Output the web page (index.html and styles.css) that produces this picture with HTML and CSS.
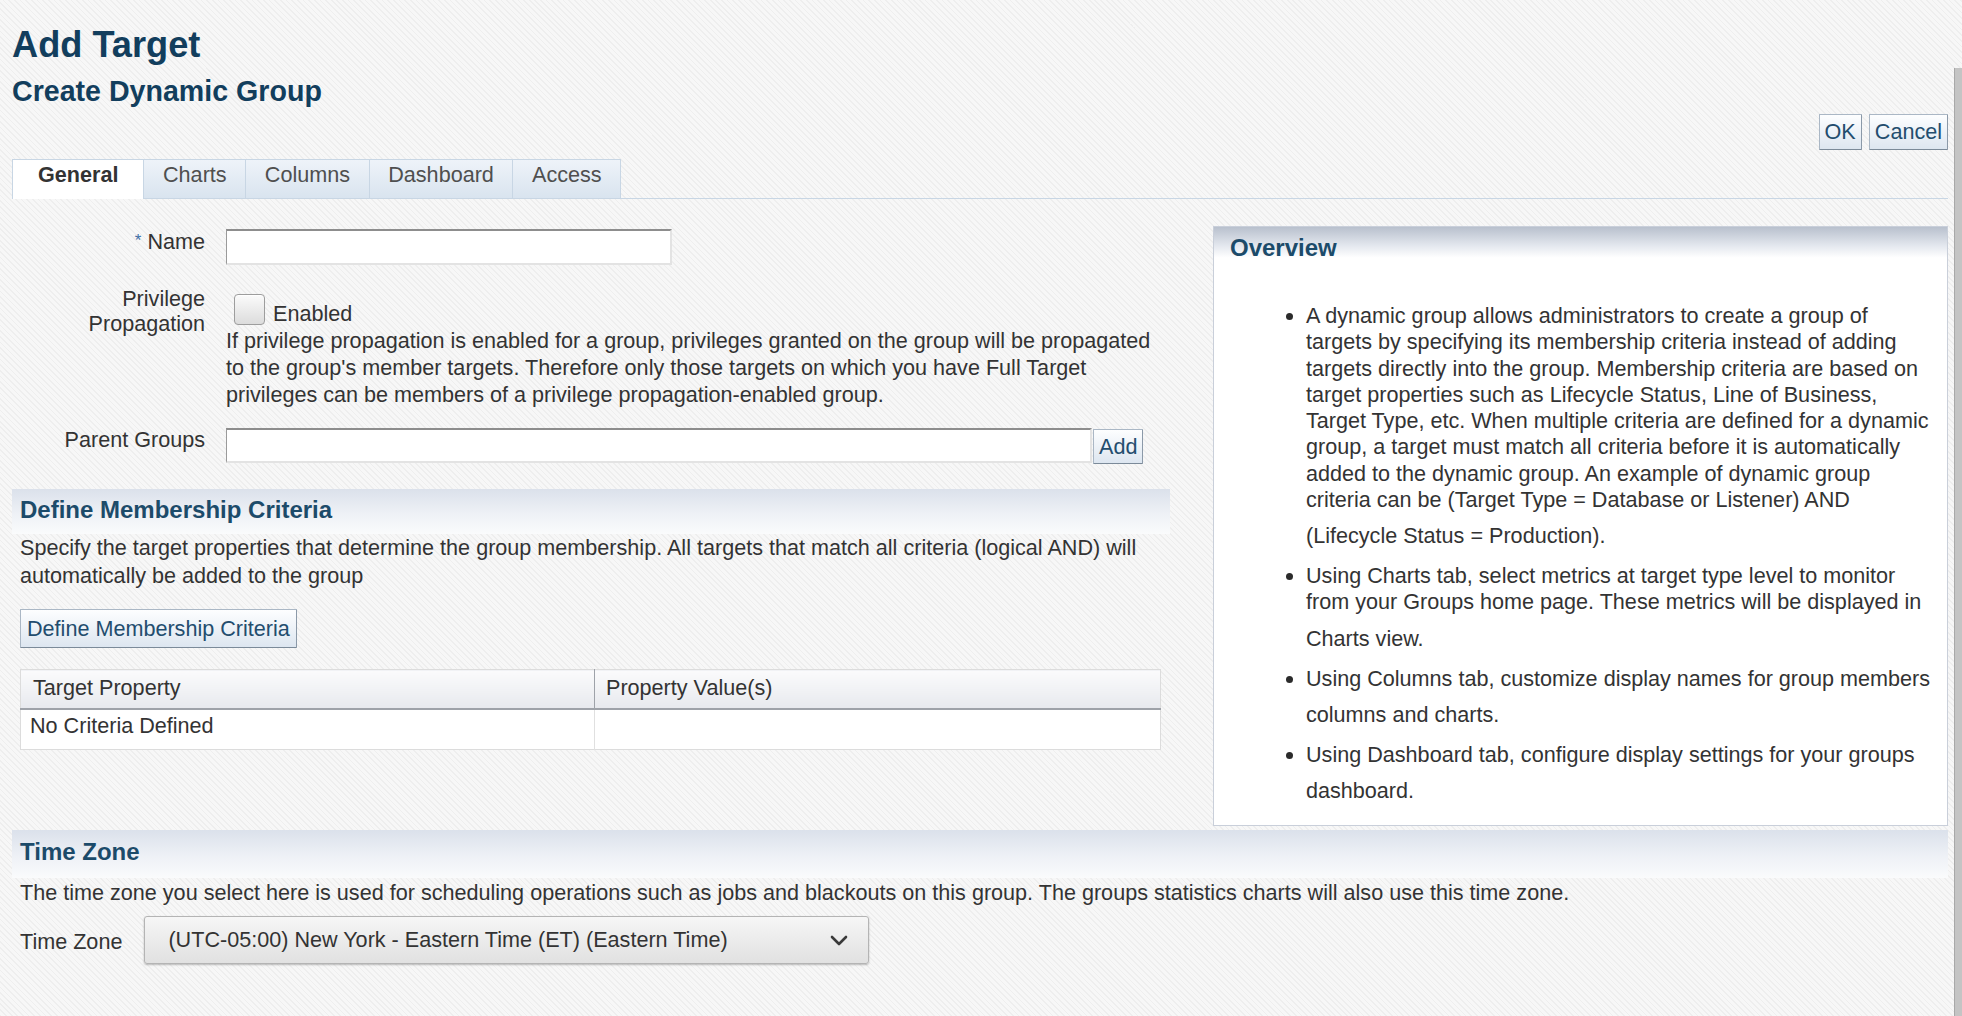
FILE: index.html
```html
<!DOCTYPE html>
<html lang="en">
<head>
<meta charset="utf-8">
<title>Add Target - Create Dynamic Group</title>
<link rel="stylesheet" href="styles.css">
</head>
<body>
<div class="page">
  <header class="page-head">
    <h1 class="title">Add Target</h1>
    <h2 class="subtitle">Create Dynamic Group</h2>
    <div class="actions">
      <button class="btn btn-ok">OK</button>
      <button class="btn">Cancel</button>
    </div>
  </header>

  <nav class="tabs">
    <div class="tab tab-selected">General</div>
    <div class="tab">Charts</div>
    <div class="tab">Columns</div>
    <div class="tab">Dashboard</div>
    <div class="tab">Access</div>
  </nav>

  <div class="content">
    <div class="main-col">
      <div class="form">
        <label class="label label-single"><span class="req">*</span> Name</label>
        <div class="control"><input class="input input-name" type="text"></div>

        <label class="label label-double">Privilege Propagation</label>
        <div class="control">
          <div class="check-row">
            <span class="checkbox"></span>
            <span class="check-text">Enabled</span>
          </div>
          <p class="para">If privilege propagation is enabled for a group, privileges granted on the group will be propagated to the group's member targets. Therefore only those targets on which you have Full Target privileges can be members of a privilege propagation-enabled group.</p>
        </div>

        <label class="label label-single">Parent Groups</label>
        <div class="control control-row">
          <input class="input input-parent" type="text">
          <button class="btn btn-add">Add</button>
        </div>
      </div>

      <section class="section section-criteria">
        <div class="section-head">Define Membership Criteria</div>
        <p class="section-desc">Specify the target properties that determine the group membership. All targets that match all criteria (logical AND) will automatically be added to the group</p>
        <button class="btn btn-define">Define Membership Criteria</button>
        <table class="criteria">
          <thead>
            <tr><th class="col-prop">Target Property</th><th class="col-val">Property Value(s)</th></tr>
          </thead>
          <tbody>
            <tr><td class="col-prop">No Criteria Defined</td><td class="col-val"></td></tr>
          </tbody>
        </table>
      </section>
    </div>

    <aside class="overview">
      <div class="panel-head">Overview</div>
      <ul class="overview-list">
        <li>A dynamic group allows administrators to create a group of targets by specifying its membership criteria instead of adding targets directly into the group. Membership criteria are based on target properties such as Lifecycle Status, Line of Business, Target Type, etc. When multiple criteria are defined for a dynamic group, a target must match all criteria before it is automatically added to the dynamic group. An example of dynamic group criteria can be (Target Type = Database or Listener) AND (Lifecycle Status = Production).</li>
        <li>Using Charts tab, select metrics at target type level to monitor from your Groups home page. These metrics will be displayed in Charts view.</li>
        <li>Using Columns tab, customize display names for group members columns and charts.</li>
        <li>Using Dashboard tab, configure display settings for your groups dashboard.</li>
      </ul>
    </aside>
  </div>

  <section class="section section-tz">
    <div class="section-head">Time Zone</div>
    <p class="section-desc">The time zone you select here is used for scheduling operations such as jobs and blackouts on this group. The groups statistics charts will also use this time zone.</p>
    <div class="tz-row">
      <span class="tz-label">Time Zone</span>
      <div class="select">
        <span class="select-text">(UTC-05:00) New York - Eastern Time (ET) (Eastern Time)</span>
        <svg class="chevron" width="18" height="11" viewBox="0 0 18 11"><path d="M2 2 L9 9 L16 2" fill="none" stroke="#3a3a3a" stroke-width="2.6" stroke-linecap="round" stroke-linejoin="round"/></svg>
      </div>
    </div>
  </section>
</div>
<div class="scrollbar"></div>
</body>
</html>
```

FILE: styles.css
```css
* {
  box-sizing: border-box;
}

html, body {
  margin: 0;
  padding: 0;
}

body {
  width: 1962px;
  height: 1016px;
  overflow: hidden;
  font-family: "Liberation Sans", Arial, sans-serif;
  font-size: 21.6px;
  color: #333333;
  background-color: #f4f4f4;
  background-image: repeating-linear-gradient(45deg, #eeeeee 0px, #eeeeee 1.2px, #f7f7f7 1.2px, #f7f7f7 4px);
}

.page {
  padding: 25px 14px 0 12px;
}

/* ---------- header ---------- */
.title {
  margin: 0;
  font-size: 36.2px;
  line-height: 40px;
  font-weight: bold;
  color: #123e5d;
}

.subtitle {
  margin: 9px 0 0;
  font-size: 28.6px;
  line-height: 34px;
  font-weight: bold;
  color: #123e5d;
}

.actions {
  display: flex;
  justify-content: flex-end;
  gap: 7px;
  margin-top: 6px;
}

.btn {
  font-family: "Liberation Sans", Arial, sans-serif;
  font-size: 21.6px;
  color: #234d6e;
  background: linear-gradient(#fdfeff, #dde6f0);
  border: 1px solid #aab7c5;
  border-right-color: #8b99a8;
  border-bottom-color: #7b8a99;
  border-radius: 1px;
  padding: 0 5px;
  height: 36px;
  line-height: 34px;
  margin: 0;
  cursor: pointer;
}

/* ---------- tabs ---------- */
.tabs {
  display: flex;
  margin-top: 9px;
  border-bottom: 1px solid #c8d6e4;
}

.tab {
  height: 39px;
  padding: 0 18.6px 8px;
  line-height: 30px;
  border-top: 1px solid #c8d6e4;
  border-right: 1px solid #c8d6e4;
  background: linear-gradient(#eef3f9, #d9e4ef);
  color: #4f4f4f;
}

.tab-selected {
  border-left: 1px solid #c8d6e4;
  background: #ffffff;
  font-weight: bold;
  color: #333333;
  padding: 0 25px 9px;
  height: 40px;
  margin-bottom: -1px;
}

/* ---------- content ---------- */
.content {
  display: grid;
  grid-template-columns: 1158px 1fr;
  column-gap: 43px;
  padding-top: 27px;
  align-items: start;
}

.form {
  display: grid;
  grid-template-columns: 193px 1fr;
  column-gap: 21px;
  row-gap: 20px;
  padding-top: 3px;
  align-items: start;
}

.label {
  text-align: right;
  color: #333333;
}

.label-single {
  line-height: 26px;
  margin-top: -1px;
}

.label-double {
  line-height: 25px;
  margin-top: 1px;
}

.req {
  color: #3f6fa6;
  font-size: 17px;
  vertical-align: 3px;
}

.input {
  display: block;
  background: #ffffff;
  border: 1px solid #e3e3e3;
  border-top: 2px solid #8d8d8d;
  border-left-color: #9a9a9a;
  border-right-width: 2px;
  border-bottom-width: 2px;
  margin: 0;
  padding: 0 6px;
  font: inherit;
}

.input-name {
  width: 446px;
  height: 36px;
}

.check-row {
  display: flex;
  align-items: flex-end;
  gap: 8px;
  padding-top: 9px;
  padding-left: 8px;
}

.checkbox {
  width: 31px;
  height: 31px;
  border: 1px solid #9d9d9d;
  border-radius: 4px;
  background: linear-gradient(#fbfbfb, #dcdcdc);
  box-shadow: inset 0 1px 0 #ffffff;
}

.check-text {
  line-height: 26px;
  margin-bottom: -2px;
}

.para {
  margin: 2px 0 0;
  max-width: 936px;
  line-height: 27px;
}

.control-row {
  display: flex;
  align-items: flex-start;
  gap: 1px;
}

.input-parent {
  width: 866px;
  height: 35px;
}

.btn-add {
  height: 35px;
  line-height: 33px;
  margin-top: 1px;
}

/* ---------- sections ---------- */
.section-head {
  font-weight: bold;
  font-size: 24px;
  color: #1c4b6a;
  line-height: 41px;
  padding: 0 8px 4px;
  background: linear-gradient(#dbe1eb, #eef1f6 55%, #fafbfc);
}

.section-desc {
  margin: 0;
  padding: 0 8px;
  line-height: 27.5px;
}

.section-criteria {
  margin-top: 25px;
}

.btn-define {
  display: block;
  margin: 20px 0 0 8px;
  height: 39px;
  line-height: 37px;
  padding: 0 6px;
}

.criteria {
  margin: 21px 0 0 8px;
  width: 1141px;
  border-collapse: collapse;
  border: 1px solid #dcdcdc;
  background: #ffffff;
}

.criteria th {
  text-align: left;
  font-weight: normal;
  color: #333333;
  line-height: 36px;
  padding: 0 11px 2px;
  background: linear-gradient(#fbfbfc, #e7e9ee);
  border-bottom: 2px solid #9ea2a9;
}

.criteria th.col-prop {
  padding-left: 12px;
  border-right: 1px solid #9ea2a9;
}

.criteria td {
  line-height: 32px;
  padding: 0 9px 7px;
}

.criteria td.col-prop {
  border-right: 1px solid #e0e0e0;
}

.col-prop {
  width: 574px;
}

/* ---------- overview ---------- */
.overview {
  background: #ffffff;
  border: 1px solid #c9cfda;
  padding-bottom: 21px;
}

.panel-head {
  font-weight: bold;
  font-size: 24px;
  color: #1c4b6a;
  line-height: 41px;
  padding-left: 16px;
  background: linear-gradient(#b8c0cd, #e3e7ee 45%, #ffffff 75%);
}

.overview-list {
  margin: 35px 8px 0 0;
  padding-left: 92px;
  line-height: 26.3px;
  color: #333333;
}

.overview-list li {
  margin-bottom: 13.5px;
}

.overview-list li:last-child {
  margin-bottom: 0;
}

.overview-list li::after {
  content: "";
  display: inline-block;
  width: 0;
  height: 30px;
}

.overview-list li::marker {
  color: #2b2b2b;
}

/* ---------- time zone ---------- */
.section-tz {
  margin-top: 4px;
}

.section-tz .section-head {
  line-height: 43px;
  padding-bottom: 5px;
}

.section-tz .section-desc {
  margin-top: 1px;
  line-height: 27px;
}

.tz-row {
  display: flex;
  align-items: center;
  gap: 22px;
  margin-top: 8px;
  padding-left: 8px;
}

.tz-label {
  line-height: 48px;
  padding-top: 4px;
}

.select {
  width: 725px;
  height: 48px;
  display: flex;
  align-items: center;
  justify-content: space-between;
  padding: 0 20px 0 23px;
  border: 1px solid #b4b4b4;
  border-radius: 3px;
  background: linear-gradient(#f6f6f6, #e1e1e1);
  box-shadow: 0 1px 2px rgba(0, 0, 0, 0.25);
  color: #333333;
}

.chevron {
  display: block;
}

/* ---------- scrollbar ---------- */
.scrollbar {
  position: fixed;
  right: 0;
  top: 68px;
  bottom: 0;
  width: 8px;
  background: #c4c4c4;
  border-left: 1px solid #a8a8a8;
}
```
